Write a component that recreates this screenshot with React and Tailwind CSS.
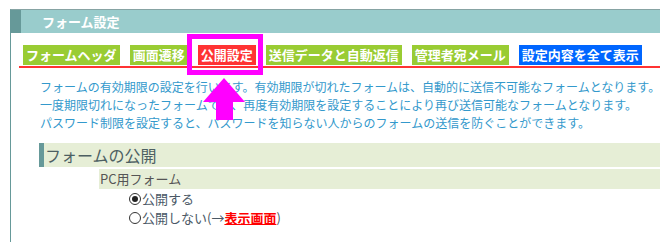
import React from "react";

const jp = { fontFamily: '"Noto Sans CJK JP", "Noto Sans", sans-serif' };

function Tab({ children, color }) {
  return (
    <span
      className={`${color} text-white font-bold text-[13px] leading-[20px] h-[20px] px-[3px] whitespace-nowrap`}
    >
      {children}
    </span>
  );
}

function Radio({ checked }) {
  return (
    <span className="inline-flex items-center justify-center w-[12px] h-[12px] rounded-full border-[1.5px] border-[#333] mr-[1px]">
      {checked && <span className="w-[6px] h-[6px] rounded-full bg-[#222]" />}
    </span>
  );
}

export default function App() {
  return (
    <div className="relative w-[660px] h-[242px] overflow-hidden bg-white pt-[9px] pl-[10px]" style={jp}>
      <div className="border-t border-[#86a3a3] border-l border-l-[#669999] h-[240px]">
        {/* header */}
        <div className="flex h-[23px]">
          <div className="w-[10px] bg-[#669999]" />
          <div className="flex-1 bg-[#99cccc] pl-[21px] text-white font-bold text-[13px] leading-[23px]">
            フォーム設定
          </div>
        </div>

        {/* tabs */}
        <div className="mt-[12px] ml-[8px] pl-[4px] pb-[1px] border-b-2 border-[#ff3333] flex gap-[10px]">
          <Tab color="bg-[#99cc33]">フォームヘッダ</Tab>
          <Tab color="bg-[#99cc33]">画面遷移</Tab>
          <Tab color="bg-[#ff3333]">公開設定</Tab>
          <Tab color="bg-[#99cc33]">送信データと自動返信</Tab>
          <Tab color="bg-[#99cc33]">管理者宛メール</Tab>
          <Tab color="bg-[#0066ff]">設定内容を全て表示</Tab>
        </div>

        {/* description */}
        <div className="mt-[10px] ml-[29px] text-[12px] leading-[18px] text-[#3399cc] whitespace-nowrap">
          <div>フォームの有効期限の設定を行います。有効期限が切れたフォームは、自動的に送信不可能なフォームとなります。</div>
          <div>一度期限切れになったフォームでも、再度有効期限を設定することにより再び送信可能なフォームとなります。</div>
          <div>パスワード制限を設定すると、パスワードを知らない人からのフォームの送信を防ぐことができます。</div>
        </div>

        {/* section */}
        <div className="mt-[11px] ml-[28px] flex h-[24px]">
          <div className="w-[5px] bg-[#669999]" />
          <div className="flex-1 bg-[#e6eed6] pl-[1px] text-[16px] leading-[24px] text-[#4d5f62]">
            フォームの公開
          </div>
        </div>
        <div className="mt-[2px] ml-[88px] h-[20px] bg-[#e6eed6] pl-[1px] text-[13px] leading-[20px] text-[#555]">
          PC用フォーム
        </div>
        <div className="ml-[118px] text-[13px] leading-[19px] text-[#4a5866]">
          <div className="flex items-center">
            <Radio checked />
            公開する
          </div>
          <div className="flex items-center">
            <Radio />
            公開しない(→
            <span className="text-[#ff0000] font-bold underline">表示画面</span>)
          </div>
        </div>
      </div>

      {/* magenta highlight */}
      <div className="absolute left-[187px] top-[34px] w-[76px] h-[41px] border-[5px] border-[#ff00ff]" />
      <svg className="absolute left-0 top-0" width="660" height="242" viewBox="0 0 660 242">
        <polygon
          points="224,78 245,102 233,102 233,120 216,120 216,102 203,102"
          fill="#ff00ff"
        />
      </svg>
    </div>
  );
}
